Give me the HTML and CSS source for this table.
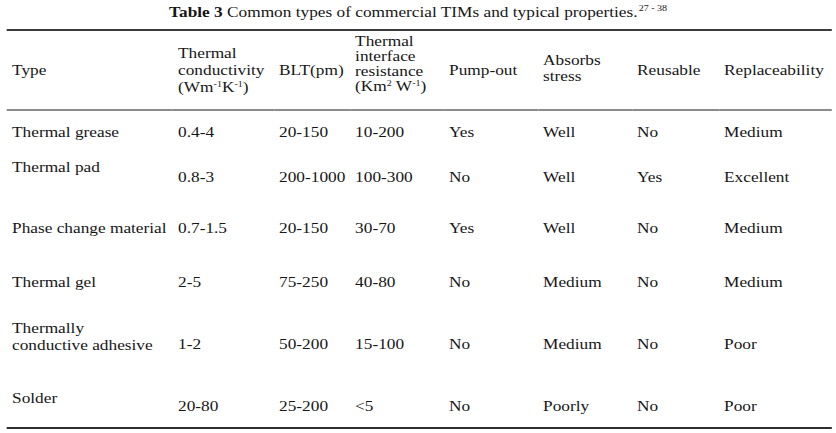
FILE: index.html
```html
<!DOCTYPE html>
<html lang="en">
<head>
<meta charset="utf-8">
<title>Table 3</title>
<link rel="stylesheet" href="styles.css">
</head>
<body>
<div class="sheet">
  <p class="caption"><b>Table 3</b> Common types of commercial TIMs and typical properties.<sup class="ref">27 - 38</sup></p>
  <table class="tims">
    <colgroup>
      <col class="c1"><col class="c2"><col class="c3"><col class="c4"><col class="c5"><col class="c6"><col class="c7"><col class="c8">
    </colgroup>
    <thead>
      <tr>
        <th>Type</th>
        <th class="h-cond">Thermal<br>conductivity<br>(Wm<sup>-1</sup>K<sup>-1</sup>)</th>
        <th>BLT(pm)</th>
        <th class="h-res">Thermal<br>interface<br>resistance<br>(Km<sup>2</sup> W<sup>-1</sup>)</th>
        <th>Pump-out</th>
        <th class="h-abs">Absorbs<br>stress</th>
        <th>Reusable</th>
        <th>Replaceability</th>
      </tr>
    </thead>
    <tbody>
      <tr class="r1">
        <td>Thermal grease</td><td>0.4-4</td><td>20-150</td><td>10-200</td><td>Yes</td><td>Well</td><td>No</td><td>Medium</td>
      </tr>
      <tr class="r2">
        <td>Thermal pad</td><td>0.8-3</td><td>200-1000</td><td>100-300</td><td>No</td><td>Well</td><td>Yes</td><td>Excellent</td>
      </tr>
      <tr class="r3">
        <td>Phase change material</td><td>0.7-1.5</td><td>20-150</td><td>30-70</td><td>Yes</td><td>Well</td><td>No</td><td>Medium</td>
      </tr>
      <tr class="r4">
        <td>Thermal gel</td><td>2-5</td><td>75-250</td><td>40-80</td><td>No</td><td>Medium</td><td>No</td><td>Medium</td>
      </tr>
      <tr class="r5">
        <td class="two">Thermally<br>conductive adhesive</td><td>1-2</td><td>50-200</td><td>15-100</td><td>No</td><td>Medium</td><td>No</td><td>Poor</td>
      </tr>
      <tr class="r6">
        <td>Solder</td><td>20-80</td><td>25-200</td><td>&lt;5</td><td>No</td><td>Poorly</td><td>No</td><td>Poor</td>
      </tr>
    </tbody>
  </table>
</div>
</body>
</html>
```

FILE: styles.css
```css
html, body {
  margin: 0;
  padding: 0;
  background: #ffffff;
}

body {
  font-family: "Liberation Serif", "Times New Roman", serif;
  color: #161616;
}

.sheet {
  width: 750px;
  padding-top: 3px;
  font-size: 15.5px;
  transform: scaleX(1.115);
  transform-origin: 0 0;
}

.caption {
  margin: 0;
  text-align: center;
  line-height: 18px;
  height: 18px;
}

.caption b {
  font-weight: bold;
}

.ref {
  font-size: 9px;
  line-height: 0;
  vertical-align: 6px;
  margin-left: 1px;
}

.tims {
  margin: 8px 0 0 6.3px;
  width: 740px;
  table-layout: fixed;
  border-collapse: separate;
  border-spacing: 0;
  border-top: 2px solid #3a3a3a;
  border-bottom: 2px solid #2e2e2e;
}

.c1 { width: 148.9px; }
.c2 { width: 90.6px; }
.c3 { width: 68.2px; }
.c4 { width: 84.3px; }
.c5 { width: 84.3px; }
.c6 { width: 84.3px; }
.c7 { width: 78px; }
.c8 { width: 101.4px; }

.tims th,
.tims td {
  padding: 13px 0 0 4.5px;
  text-align: left;
  vertical-align: top;
  font-weight: normal;
  line-height: 16px;
  white-space: nowrap;
}

.tims sup {
  font-size: 9px;
  line-height: 0;
  vertical-align: 5px;
}

.tims thead tr {
  height: 80px;
}

.tims thead th {
  padding-top: 31px;
  border-bottom: 2px solid #8c8c8c;
}

.tims thead th.h-cond {
  padding-top: 12.5px;
  line-height: 17px;
}

.tims thead th.h-res {
  padding-top: 1.5px;
  line-height: 15px;
}

.tims thead th.h-abs {
  padding-top: 21px;
}

.r1 { height: 35px; }
.r2 { height: 61px; }
.r3 { height: 54px; }
.r4 { height: 45px; }
.r5 { height: 71px; }
.r6 { height: 50px; }

.r2 td { padding-top: 23px; }
.r2 td:first-child { padding-top: 13px; }

.r5 td { padding-top: 30px; }
.r5 td.two { padding-top: 13px; line-height: 17px; }

.r6 td { padding-top: 20.5px; }
.r6 td:first-child { padding-top: 13px; }
```
